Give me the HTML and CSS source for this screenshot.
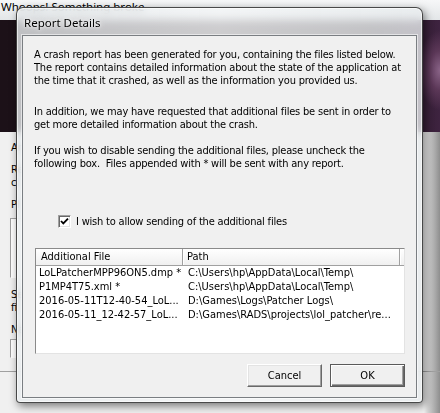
FILE: index.html
```html
<!DOCTYPE html>
<html>

<head>
    <title>Report Details</title>
    <meta charset="utf-8">
    <link rel="stylesheet" href="styles.css">
</head>

<body>
    <div class="parent">
        <div class="parent-title">Whoops! Something broke</div>
        <div class="parent-banner"></div>
        <div class="parent-client">
            <div class="p-line first">An</div>
            <div class="p-line gap">Re</div>
            <div class="p-line">cl</div>
            <div class="p-line gap">Pl</div>
            <div class="p-edit big"></div>
            <div class="p-line gap-s">Se</div>
            <div class="p-line">fi</div>
            <div class="p-line gap">Na</div>
            <div class="p-edit small"></div>
            <div class="p-rule"></div>
        </div>
    </div>

    <div class="dialog">
        <div class="caption">Report Details</div>
        <div class="client">
            <p class="msg">A crash report has been generated for you, containing the files listed below.<br>The report contains detailed information about the state of the application at<br>the time that it crashed, as well as the information you provided us.</p>
            <p class="msg second">In addition, we may have requested that additional files be sent in order to<br>get more detailed information about the crash.</p>
            <p class="msg third">If you wish to disable sending the additional files, please uncheck the<br>following box.&nbsp; Files appended with * will be sent with any report.</p>

            <label class="check">
                <span class="box">
                    <svg width="11" height="11" viewBox="0 0 11 11"><path d="M2 5 L4.3 7.4 L9 2.6" fill="none" stroke="#000" stroke-width="1.8"/></svg>
                </span>
                I wish to allow sending of the additional files
            </label>

            <div class="list">
                <div class="list-head">
                    <div class="col-file">Additional File</div>
                    <div class="col-path">Path</div>
                    <div class="col-fill"></div>
                </div>
                <div class="list-row">
                    <div class="col-file">LoLPatcherMPP96ON5.dmp *</div>
                    <div class="col-path">C:\Users\hp\AppData\Local\Temp\</div>
                </div>
                <div class="list-row">
                    <div class="col-file">P1MP4T75.xml *</div>
                    <div class="col-path">C:\Users\hp\AppData\Local\Temp\</div>
                </div>
                <div class="list-row">
                    <div class="col-file">2016-05-11T12-40-54_LoL...</div>
                    <div class="col-path">D:\Games\Logs\Patcher Logs\</div>
                </div>
                <div class="list-row">
                    <div class="col-file">2016-05-11_12-42-57_LoL...</div>
                    <div class="col-path">D:\Games\RADS\projects\lol_patcher\re...</div>
                </div>
            </div>

            <div class="buttons">
                <button class="btn">Cancel</button>
                <button class="btn default">OK</button>
            </div>
        </div>
    </div>
</body>

</html>
```

FILE: styles.css
```css
body {
    margin: 0;
    width: 440px;
    height: 413px;
    overflow: hidden;
    position: relative;
    background-color: #f0f0f0;
    color: #000000;
    font-family: "DejaVu Sans Condensed", "Liberation Sans", sans-serif;
    font-size: 11px;
}

/* window behind the dialog */
.parent {
    height: 413px;
    display: flex;
    flex-direction: column;
}

.parent-title {
    height: 20px;
    box-sizing: border-box;
    padding: 2px 0 0 1px;
    line-height: 10px;
    background: linear-gradient(#f6f7f8, #e3e6e8);
    font-family: "Noto Sans", sans-serif;
    font-size: 11.5px;
}

.parent-banner {
    height: 112px;
    background:
        radial-gradient(ellipse 22px 40px at 100% 45%, #8a6488 0, #5b3757 50%, transparent 100%),
        linear-gradient(90deg, #1c1118 0, #1f1219 85%, #3e2340 100%);
}

.parent-client {
    flex-grow: 1;
    display: flex;
    flex-direction: column;
    padding-left: 11px;
    background: linear-gradient(90deg, #f0f0f0 0, #f0f0f0 424px, #d2d2d2 428px, #8e8e8e 440px);
}

.p-line {
    line-height: 13px;
    white-space: nowrap;
}

.p-line.first {
    margin-top: 9px;
}

.p-line.gap {
    margin-top: 9px;
}

.p-line.gap-s {
    margin-top: 10px;
}

.p-edit {
    width: 300px;
    background-color: #ffffff;
    border: 1px solid;
    border-color: #a0a0a0 #ffffff #ffffff #a0a0a0;
    margin-left: -1px;
}

.p-edit.big {
    height: 58px;
    margin-top: 7px;
}

.p-edit.small {
    height: 17px;
    margin-top: 3px;
}

.p-rule {
    margin: 13px 0 0 -11px;
    height: 1px;
    background-color: #a0a0a0;
}

/* dialog */
.dialog {
    position: absolute;
    left: 16px;
    top: 7px;
    width: 407px;
    height: 396px;
    box-sizing: border-box;
    display: flex;
    flex-direction: column;
    padding: 0 5px 4px 5px;
    border: 1px solid rgba(30, 30, 30, 0.8);
    border-radius: 7px 7px 4px 4px;
    background: linear-gradient(90deg, rgba(232, 236, 238, 0.8), rgba(244, 246, 247, 0.82) 50%, rgba(232, 236, 238, 0.8));
    backdrop-filter: blur(4px);
    box-shadow: 2px 3px 9px rgba(0, 0, 0, 0.5), inset 0 0 0 1px rgba(255, 255, 255, 0.6);
}

.caption {
    height: 27px;
    box-sizing: border-box;
    padding: 9px 0 0 2px;
    line-height: 12px;
    font-family: "Noto Sans", sans-serif;
    font-size: 11.5px;
    text-shadow: 0 0 6px #ffffff, 0 0 3px #ffffff;
}

.client {
    flex-grow: 1;
    display: flex;
    flex-direction: column;
    padding: 12px 11px 0 11px;
    background-color: #f0f0f0;
    border: 1px solid #7a7e82;
    box-shadow: 0 0 0 1px rgba(255, 255, 255, 0.55);
}

.msg {
    margin: 0;
    line-height: 13px;
    letter-spacing: -0.2px;
    white-space: nowrap;
}

.msg.second {
    margin-top: 18px;
}

.msg.third {
    margin-top: 13px;
}

.check {
    display: flex;
    align-items: center;
    gap: 5px;
    height: 13px;
    margin: 45px 0 0 24px;
    letter-spacing: -0.2px;
    white-space: nowrap;
}

.box {
    width: 13px;
    height: 13px;
    box-sizing: border-box;
    display: flex;
    align-items: center;
    justify-content: center;
    background-color: #ffffff;
    border: 1px solid;
    border-color: #a0a0a0 #ffffff #ffffff #a0a0a0;
    box-shadow: inset 1px 1px 0 #696969, inset -1px -1px 0 #e3e3e3;
}

/* file list */
.list {
    width: 370px;
    height: 106px;
    box-sizing: border-box;
    margin: 20px 0 0 1px;
    background-color: #ffffff;
    border: 1px solid;
    border-color: #8a8a8a #e3e3e3 #e3e3e3 #8a8a8a;
    overflow: hidden;
}

.list-head {
    display: flex;
    height: 16px;
    line-height: 16px;
    border-bottom: 1px solid #a0a0a0;
    background: linear-gradient(#ffffff, #f0f0f0);
}

.list-head div {
    box-sizing: border-box;
    border-right: 1px solid #a0a0a0;
    box-shadow: 1px 0 0 #ffffff;
}

.list-head .col-file {
    width: 147px;
    padding-left: 5px;
}

.list-head .col-path {
    width: 217px;
    padding-left: 4px;
}

.list-head .col-fill {
    flex-grow: 1;
    border-right: none;
}

.list-row {
    display: flex;
    height: 14px;
    line-height: 14px;
    white-space: nowrap;
}

.list-row:first-of-type {
    margin-top: 1px;
}

.list-row .col-file {
    width: 147px;
    box-sizing: border-box;
    padding-left: 3px;
}

.list-row .col-path {
    padding-left: 5px;
}

.buttons {
    display: flex;
    justify-content: flex-end;
    gap: 8px;
    margin-top: 10px;
}

.btn {
    width: 75px;
    height: 23px;
    box-sizing: border-box;
    padding: 0;
    font-family: inherit;
    font-size: 11px;
    color: #000000;
    background-color: #f0f0f0;
    border: 1px solid;
    border-color: #ffffff #696969 #696969 #ffffff;
    box-shadow: inset -1px -1px 0 #a0a0a0, inset 1px 1px 0 #e3e3e3;
}

.btn.default {
    border: 1px solid #5a5a5a;
    box-shadow: inset 1px 1px 0 #ffffff, inset -1px -1px 0 #696969, inset -2px -2px 0 #a0a0a0;
}
```
